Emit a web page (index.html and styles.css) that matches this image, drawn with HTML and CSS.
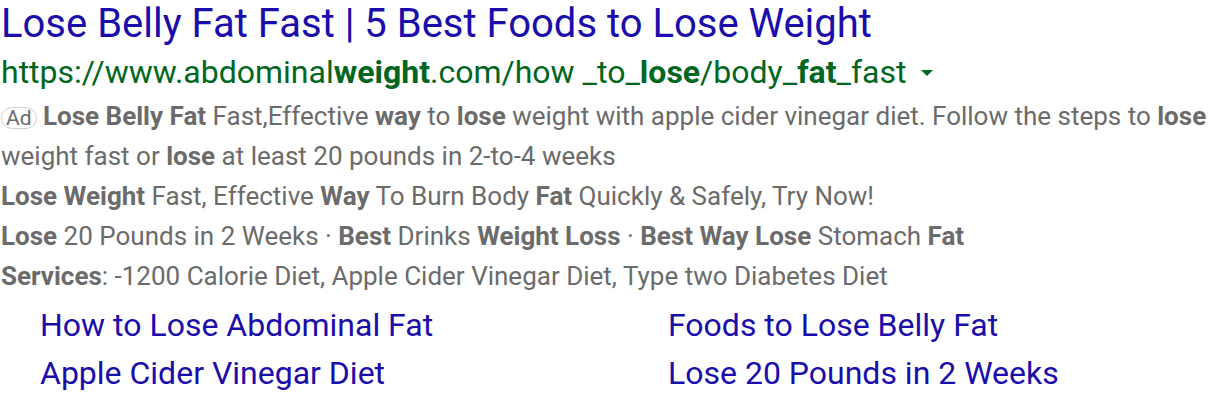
FILE: index.html
```html
<!DOCTYPE html>
<html>
<head>
<meta charset="utf-8">
<link rel="stylesheet" href="styles.css">
</head>
<body>
<div class="ad">
  <div class="title">Lose Belly Fat Fast | 5 Best Foods to Lose Weight</div>
  <div class="url">https://www.abdominal<b>weight</b>.com/how _to_<b>lose</b>/body_<b>fat</b>_fast<span class="caret"></span></div>
  <div class="desc"><span class="badge">Ad</span> <b>Lose Belly Fat</b> Fast,Effective <b>way</b> to <b>lose</b> weight with apple cider vinegar diet. Follow the steps to <b>lose</b> weight fast or <b>lose</b> at least 20 pounds in 2-to-4 weeks</div>
  <div class="desc"><b>Lose Weight</b> Fast, Effective <b>Way</b> To Burn Body <b>Fat</b> Quickly &amp; Safely, Try Now!</div>
  <div class="desc"><b>Lose</b> 20 Pounds in 2 Weeks · <b>Best</b> Drinks <b>Weight Loss</b> · <b>Best Way Lose</b> Stomach <b>Fat</b></div>
  <div class="desc"><b>Services</b>: -1200 Calorie Diet, Apple Cider Vinegar Diet, Type two Diabetes Diet</div>
  <div class="sitelinks">
    <a class="link">How to Lose Abdominal Fat</a>
    <a class="link">Foods to Lose Belly Fat</a>
    <a class="link">Apple Cider Vinegar Diet</a>
    <a class="link">Lose 20 Pounds in 2 Weeks</a>
  </div>
</div>
</body>
</html>
```
FILE: styles.css
```css
html, body {
  margin: 0;
  padding: 0;
  background: #fff;
}
body {
  font-family: Roboto, "Liberation Sans", Arial, sans-serif;
}
.ad {
  padding: 0 0 0 1px;
  width: 1212px;
}
.title {
  color: #1a0dab;
  font-size: 40px;
  line-height: 48px;
}
.url {
  color: #006621;
  font-size: 32px;
  line-height: 48px;
}
.url b {
  font-weight: 700;
}
.caret {
  display: inline-block;
  width: 0;
  height: 0;
  border-left: 6px solid transparent;
  border-right: 6px solid transparent;
  border-top: 6px solid #006621;
  margin-left: 14px;
  vertical-align: middle;
  position: relative;
  top: -2px;
}
.desc {
  color: #6b6b6b;
  font-size: 26px;
  line-height: 40px;
}
.desc b {
  font-weight: 700;
}
.badge {
  display: inline-block;
  border: 1px solid #d0d0d0;
  border-radius: 12px;
  font-size: 21px;
  line-height: 20px;
  padding: 0 4px;
  color: #6b6b6b;
  vertical-align: 0;
}
.sitelinks {
  display: grid;
  grid-template-columns: 628px 1fr;
  padding: 5px 0 0 39px;
}
.link {
  color: #1a0dab;
  font-size: 32px;
  line-height: 48px;
}
```
